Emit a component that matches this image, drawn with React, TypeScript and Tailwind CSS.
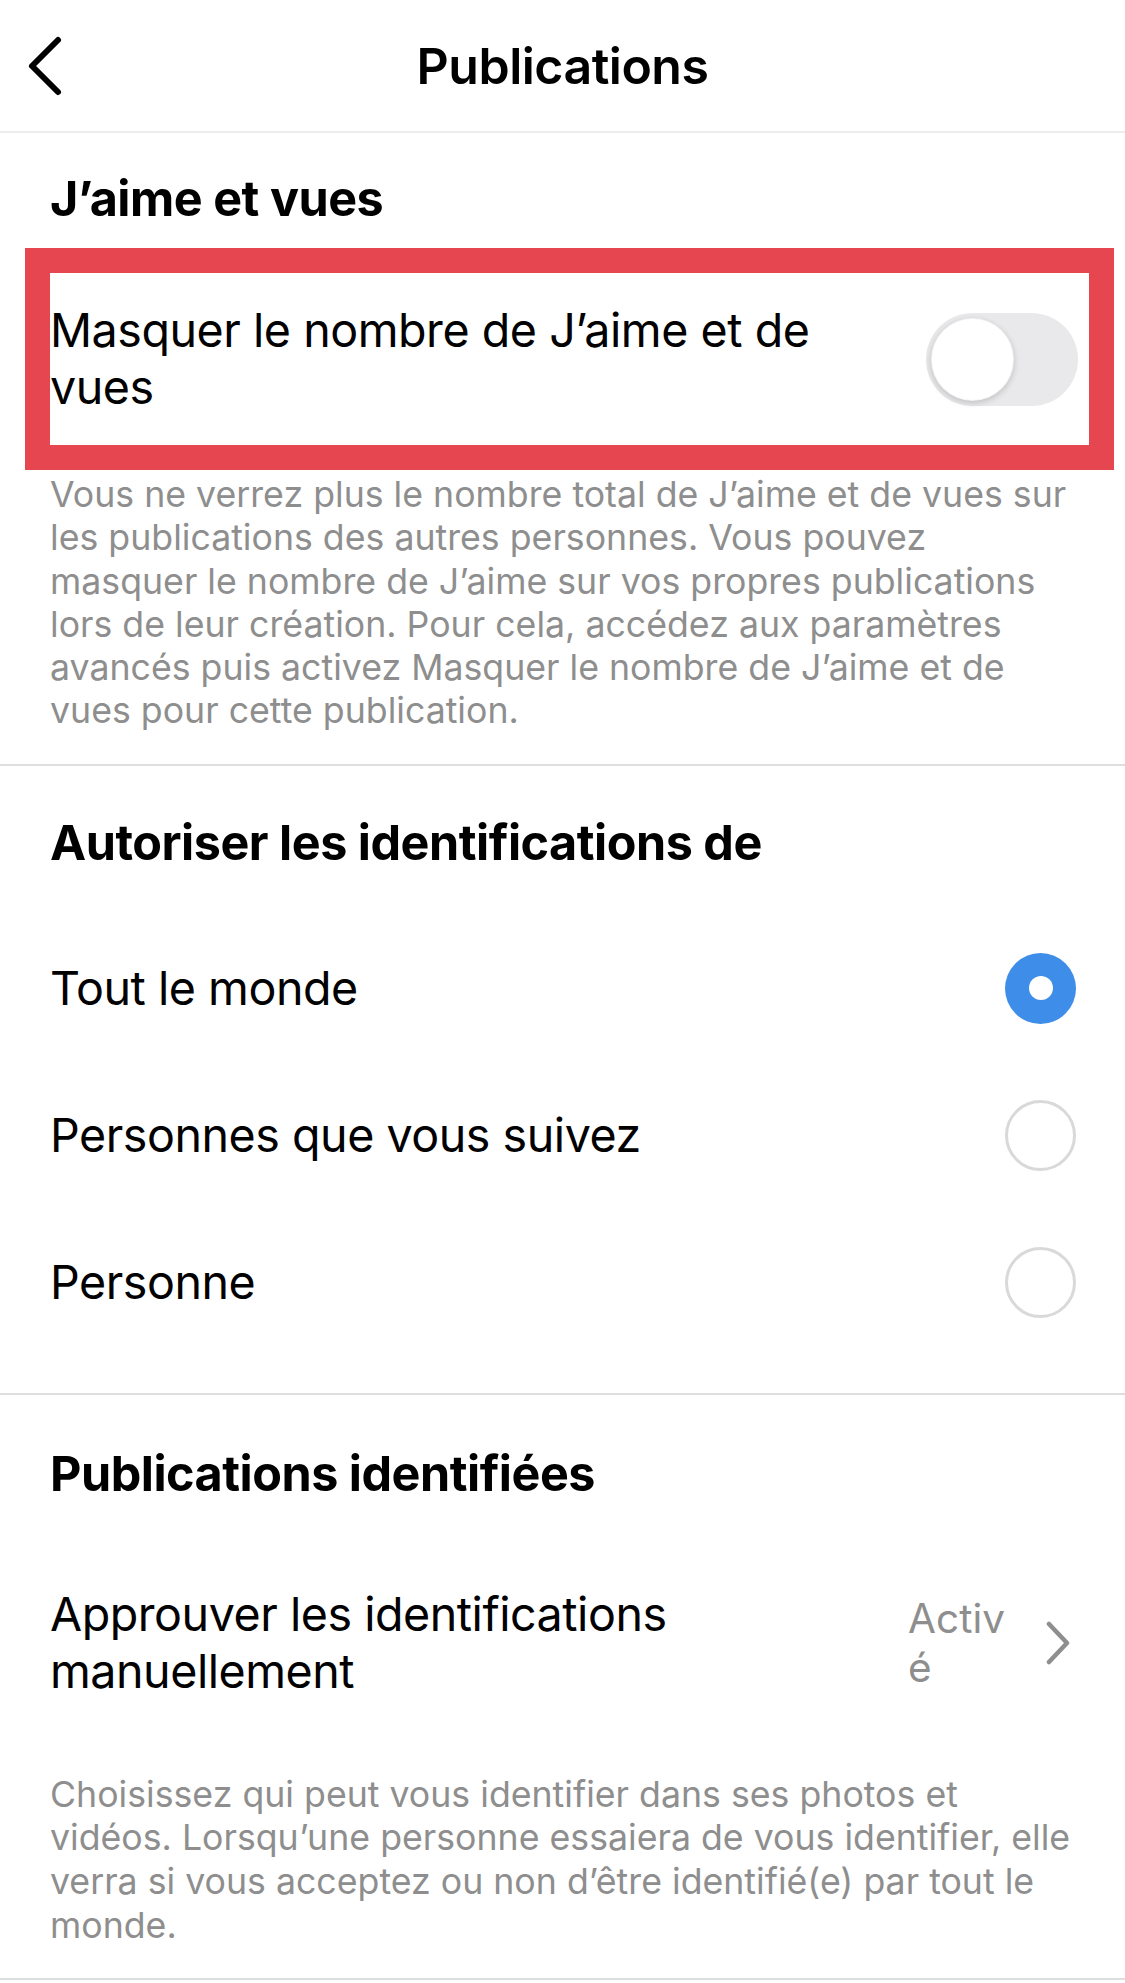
import React from "react";

const font = { fontFamily: 'Inter, "Liberation Sans", sans-serif' };

function Toggle() {
  return (
    <div className="w-[152px] h-[93px] rounded-full bg-[#e9e9eb] flex items-center p-[5px]">
      <div className="w-[83px] h-[83px] rounded-full bg-white shadow-[0_2px_6px_rgba(0,0,0,0.18)] border border-black/5" />
    </div>
  );
}

function Radio({ checked }: { checked?: boolean }) {
  if (checked) {
    return (
      <div className="w-[71px] h-[71px] rounded-full bg-[#3e8ee9] flex items-center justify-center">
        <div className="w-[24px] h-[24px] rounded-full bg-white" />
      </div>
    );
  }
  return <div className="w-[71px] h-[71px] rounded-full border-[3px] border-[#d9d9d9]" />;
}

function Lines({ lines }: { lines: string[] }) {
  return (
    <>
      {lines.map((l) => (
        <span key={l} className="block whitespace-nowrap">
          {l}
        </span>
      ))}
    </>
  );
}

export default function App() {
  const options = [
    { label: "Tout le monde", checked: true },
    { label: "Personnes que vous suivez" },
    { label: "Personne" },
  ];

  return (
    <div className="w-[1125px] min-h-[1983px] bg-white text-black" style={font}>
      {/* header */}
      <header className="h-[133px] border-b-2 border-[#ececec] grid grid-cols-[1fr_auto_1fr] items-center">
        <div className="pl-[24px]">
          <svg width="44" height="64" viewBox="0 0 44 64" fill="none">
            <path d="M34 6 L8 32 L34 58" stroke="#000" strokeWidth="6" strokeLinecap="round" strokeLinejoin="round" />
          </svg>
        </div>
        <h1 className="text-[50px] font-semibold leading-none tracking-[-0.01em]">Publications</h1>
        <div />
      </header>

      {/* J'aime et vues */}
      <section className="border-b-2 border-[#dedede] pb-[31px]">
        <h2 className="px-[50px] pt-[37px] text-[48.5px] font-bold leading-[57px] tracking-[-0.01em]">J’aime et vues</h2>
        <div className="ml-[25px] mr-[11px] mt-[21px] border-[25px] border-[#e6464f]">
          <div className="h-[172px] flex items-center justify-between pr-[11px]">
            <p className="text-[46.6px] leading-[57px] tracking-[-0.01em]">
              <Lines lines={["Masquer le nombre de J’aime et de", "vues"]} />
            </p>
            <Toggle />
          </div>
        </div>
        <p className="px-[50px] mt-[3px] text-[35.7px] leading-[43.3px] text-[#8e8e8e]">
          <Lines
            lines={[
              "Vous ne verrez plus le nombre total de J’aime et de vues sur",
              "les publications des autres personnes. Vous pouvez",
              "masquer le nombre de J’aime sur vos propres publications",
              "lors de leur création. Pour cela, accédez aux paramètres",
              "avancés puis activez Masquer le nombre de J’aime et de",
              "vues pour cette publication.",
            ]}
          />
        </p>
      </section>

      {/* Autoriser les identifications */}
      <section className="border-b-2 border-[#dedede] pb-[37px]">
        <h2 className="px-[50px] pt-[48px] pb-[44px] text-[48.5px] font-bold leading-[57px] tracking-[-0.01em]">
          Autoriser les identifications de
        </h2>
        {options.map((o) => (
          <div key={o.label} className="h-[147px] flex items-center justify-between pl-[50px] pr-[49px]">
            <span className="text-[46.6px] leading-[57px] tracking-[-0.01em]">{o.label}</span>
            <Radio checked={o.checked} />
          </div>
        ))}
      </section>

      {/* Publications identifiées */}
      <section className="border-b-2 border-[#dedede] pb-[30px]">
        <h2 className="px-[50px] pt-[50px] text-[48.5px] font-bold leading-[57px] tracking-[-0.01em]">
          Publications identifiées
        </h2>
        <div className="mt-[84px] flex items-center pl-[50px] pr-[54px]">
          <p className="flex-1 text-[46.6px] leading-[57px] tracking-[-0.01em]">
            <Lines lines={["Approuver les identifications", "manuellement"]} />
          </p>
          <p className="text-[40.5px] leading-[49px] text-[#8e8e8e]">
            <Lines lines={["Activ", "é"]} />
          </p>
          <svg className="ml-[40px]" width="26" height="44" viewBox="0 0 26 44" fill="none">
            <path d="M4 3 L22 22 L4 41" stroke="#8e8e8e" strokeWidth="4.5" strokeLinecap="round" strokeLinejoin="round" />
          </svg>
        </div>
        <p className="px-[50px] mt-[73px] text-[35.7px] leading-[43.7px] text-[#8e8e8e]">
          <Lines
            lines={[
              "Choisissez qui peut vous identifier dans ses photos et",
              "vidéos. Lorsqu’une personne essaiera de vous identifier, elle",
              "verra si vous acceptez ou non d’être identifié(e) par tout le",
              "monde.",
            ]}
          />
        </p>
      </section>
    </div>
  );
}
